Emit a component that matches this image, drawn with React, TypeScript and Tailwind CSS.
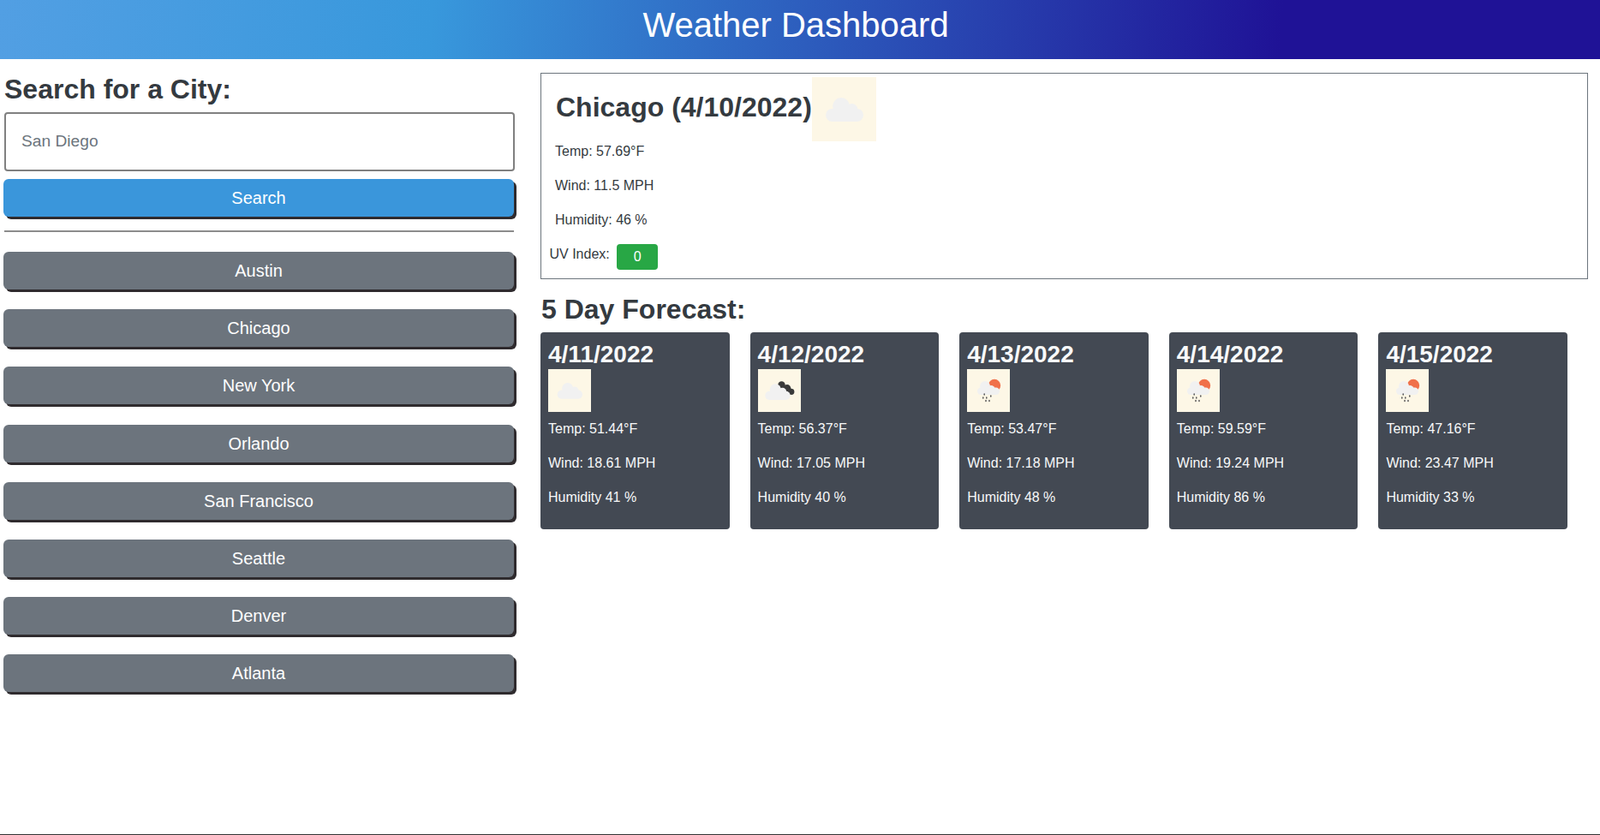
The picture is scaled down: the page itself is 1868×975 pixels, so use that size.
const cities = ["Austin", "Chicago", "New York", "Orlando", "San Francisco", "Seattle", "Denver", "Atlanta"];

const forecast = [
  { date: "4/11/2022", icon: "cloud", temp: "51.44", wind: "18.61", humidity: "41" },
  { date: "4/12/2022", icon: "broken", temp: "56.37", wind: "17.05", humidity: "40" },
  { date: "4/13/2022", icon: "rain", temp: "53.47", wind: "17.18", humidity: "48" },
  { date: "4/14/2022", icon: "rain", temp: "59.59", wind: "19.24", humidity: "86" },
  { date: "4/15/2022", icon: "rain", temp: "47.16", wind: "23.47", humidity: "33" },
];

function CloudShape({ fill = "#f1f1f1" }: { fill?: string }) {
  return (
    <g fill={fill}>
      <circle cx="22.7" cy="22.6" r="6.6" />
      <circle cx="31" cy="25.2" r="4.6" />
      <rect x="10.7" y="24.6" width="29.3" height="10.1" rx="5" />
    </g>
  );
}

function WeatherIcon({ type, className }: { type: string; className: string }) {
  return (
    <svg viewBox="0 0 50 50" className={className}>
      <rect width="50" height="50" fill="#fdf7e6" />
      {type === "cloud" && <CloudShape />}
      {type === "broken" && (
        <>
          <g fill="#3a3a3a">
            <circle cx="27.5" cy="18.5" r="4.2" />
            <circle cx="34" cy="22.5" r="4.4" />
            <circle cx="39" cy="26.5" r="3.4" />
            <path d="M25 15.5 L41 24 L37 29.5 L28 24 Z" />
          </g>
          <g transform="translate(-2.4 1.2)">
            <CloudShape />
          </g>
        </>
      )}
      {type === "rain" && (
        <>
          <circle cx="32" cy="19" r="7.2" fill="#f0704a" />
          <g fill="#f1f1f1">
            <circle cx="21" cy="20" r="6" />
            <circle cx="28" cy="23.5" r="4.5" />
            <rect x="12" y="21.5" width="26" height="8.5" rx="4.2" />
          </g>
          <g stroke="#555" strokeWidth="1.5" strokeLinecap="round">
            <path d="M20.2 29v1M27.8 31v1M18.8 33v1M22.8 33v1M22 36.5v1M26 36.5v1" />
          </g>
        </>
      )}
    </svg>
  );
}

function ForecastCard({ day }: { day: (typeof forecast)[number] }) {
  return (
    <div className="h-[230px] w-[220.6px] rounded bg-[#434953] p-[9px] text-[#f8f9fa]">
      <h4 className="text-[28px] leading-[34px] font-bold">{day.date}</h4>
      <WeatherIcon type={day.icon} className="h-[50px] w-[50px]" />
      <p className="mt-2 mb-4">Temp: {day.temp}°F</p>
      <p className="mb-4">Wind: {day.wind} MPH</p>
      <p>Humidity {day.humidity} %</p>
    </div>
  );
}

export default function App() {
  return (
    <div className="flex min-h-[975px] flex-col bg-white font-['Liberation_Sans',Arial,sans-serif] text-base leading-6 text-[#343a40]">
      {/* Header */}
      <header className="h-[69px] bg-[linear-gradient(95deg,#529fe3_0%,#3898dc_27%,#1f1296_80%)] pr-[10px] text-center">
        <h1 className="text-[40px] leading-[58px] text-white">Weather Dashboard</h1>
      </header>

      <main className="flex flex-1">
        {/* Search sidebar */}
        <aside className="w-[631px] shrink-0 pt-4 pr-[31px] pl-1">
          <h2 className="mb-2 ml-px text-[32px] leading-[38px] font-bold">Search for a City:</h2>
          <input
            placeholder="San Diego"
            className="mb-[9px] ml-px block h-[69px] w-[596px] rounded border-2 border-[#808080] bg-white px-[18px] pb-[2px] text-[19.2px] placeholder:text-[#6c757d]"
          />
          <button className="block h-[44px] w-full rounded-md bg-[#3a96db] text-[20px] text-white shadow-[3px_3px_0_#2f2b2e]">
            Search
          </button>
          <hr className="mt-4 mb-[23px] ml-px border-t-2 border-[#8c8c8c]" />
          <div className="flex flex-col gap-[23.2px]">
            {cities.map((city) => (
              <button
                key={city}
                className="h-[44px] w-full rounded-md bg-[#6c747d] text-[20px] text-white shadow-[3px_3px_0_#2f2b2e]"
              >
                {city}
              </button>
            ))}
          </div>
        </aside>

        {/* Current weather and forecast */}
        <section className="flex-1 pt-4 pr-[14px]">
          <div className="h-[241px] border border-[#6c757d] pt-1 pl-[17px]">
            <div className="flex h-[75px] items-center">
              <h2 className="mb-[5px] text-[32px] leading-[38px] font-bold">Chicago (4/10/2022)</h2>
              <WeatherIcon type="cloud" className="h-[75px] w-[75px]" />
            </div>
            <div className="-ml-px">
              <p className="mb-4">Temp: 57.69°F</p>
              <p className="mb-4">Wind: 11.5 MPH</p>
              <p className="mb-4">Humidity: 46 %</p>
            </div>
            <div className="-ml-[7.5px] flex items-start gap-[8.5px]">
              <span>UV Index:</span>
              <span className="flex h-[30px] w-[48px] items-center justify-center rounded bg-[#28a745] text-white">0</span>
            </div>
          </div>

          <h2 className="mt-4 mb-2 ml-px text-[32px] leading-[38px] font-bold">5 Day Forecast:</h2>
          <div className="flex gap-6">
            {forecast.map((day) => (
              <ForecastCard key={day.date} day={day} />
            ))}
          </div>
        </section>
      </main>

      <div className="h-px bg-[#333]" />
    </div>
  );
}
